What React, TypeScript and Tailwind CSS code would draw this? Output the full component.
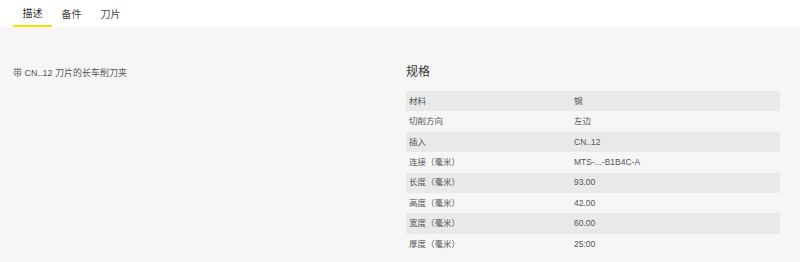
const specs = [
  ["材料", "钢"],
  ["切削方向", "左边"],
  ["插入", "CN..12"],
  ["连接（毫米）", "MTS-...-B1B4C-A"],
  ["长度（毫米）", "93.00"],
  ["高度（毫米）", "42.00"],
  ["宽度（毫米）", "60.00"],
  ["厚度（毫米）", "25:00"],
];

const tabs = ["描述", "备件", "刀片"];

export default function App() {
  return (
    <div
      className="h-[262px] w-[800px] bg-[#f6f6f6] text-[#555]"
      style={{ fontFamily: '"Liberation Sans", "Noto Sans CJK SC", sans-serif' }}
    >
      <nav className="flex h-[27px] bg-white pl-[13px]">
        {tabs.map((tab, i) => (
          <div
            key={tab}
            className={
              i === 0
                ? "flex w-[39px] items-center justify-center border-b-2 border-[#f5e000] pt-[1px] text-[10px] text-[#333]"
                : "flex w-[39px] items-center justify-center pt-[1px] text-[10px] text-[#444]"
            }
          >
            {tab}
          </div>
        ))}
      </nav>

      <div className="flex pt-[37px]">
        <p className="w-[406px] pl-[13px] pt-[3px] text-[9px] leading-[12px]">
          带 CN..12 刀片的长车削刀夹
        </p>

        <section className="w-[374px]">
          <h2 className="text-[12px] leading-[16px] text-[#333]">规格</h2>
          <div className="mt-[11px]">
            {specs.map(([label, value], i) => (
              <div
                key={label}
                className={
                  i % 2 === 0
                    ? "flex h-[20.4px] items-center bg-[#e9e9e9] text-[8.5px]"
                    : "flex h-[20.4px] items-center text-[8.5px]"
                }
              >
                <span className="w-[168px] pl-[3px]">{label}</span>
                <span>{value}</span>
              </div>
            ))}
          </div>
        </section>
      </div>
    </div>
  );
}
